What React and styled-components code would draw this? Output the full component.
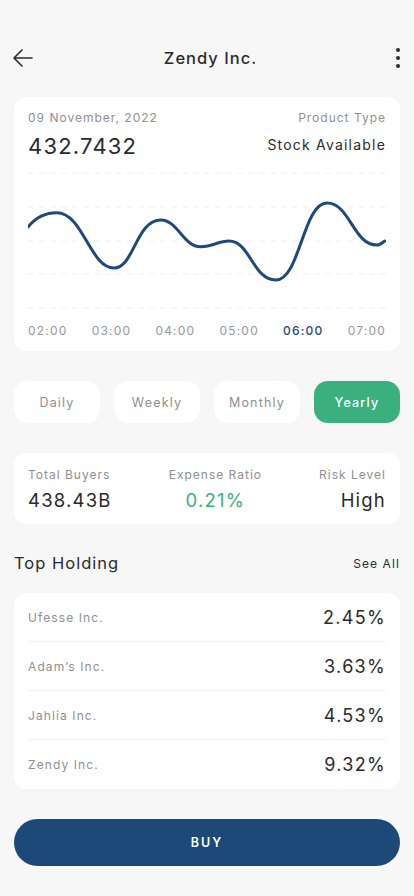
import React, { useState } from 'react';
import styled, { createGlobalStyle } from 'styled-components';

const GlobalStyle = createGlobalStyle`
  * { box-sizing: border-box; }
  body {
    margin: 0;
    background: #f7f7f7;
    font-family: Inter, "Noto Sans", sans-serif;
    color: #2a2a2e;
  }
`;

const Page = styled.div`
  width: 414px;
  min-height: 896px;
  padding: 0 14px 30px;
  display: flex;
  flex-direction: column;
`;

const Header = styled.header`
  height: 44px;
  margin-top: 36px;
  display: flex;
  align-items: center;
  justify-content: space-between;
`;

const IconButton = styled.button`
  width: 24px;
  height: 24px;
  padding: 0;
  border: none;
  background: none;
  display: flex;
  align-items: center;
  justify-content: center;
  color: #2a2a2e;
  margin: ${p => (p.$right ? '0 -10px 0 0' : '0 0 0 -3px')};
`;

const HeaderTitle = styled.h1`
  margin: 0;
  font-size: 16.5px;
  font-weight: 500;
  letter-spacing: 1px;
`;

const Card = styled.section`
  background: #fff;
  border-radius: 12px;
`;

const ChartCard = styled(Card)`
  margin-top: 17px;
  padding: 13px 14px 13px;
`;

const TopRow = styled.div`
  display: flex;
  justify-content: space-between;
`;

const Col = styled.div`
  display: flex;
  flex-direction: column;
  align-items: ${p => p.$align || 'flex-start'};
`;

const Muted = styled.span`
  font-size: 12px;
  color: #8f8f93;
  letter-spacing: 1px;
`;

const Price = styled.span`
  margin-top: 8px;
  font-size: 22px;
  letter-spacing: 1.2px;
  color: #2a2a2e;
`;

const TypeValue = styled.span`
  margin-top: 11px;
  font-size: 14px;
  font-weight: 400;
  letter-spacing: 1.2px;
`;

const ChartSvg = styled.svg`
  display: block;
  margin-top: 6px;
`;

const Axis = styled.div`
  margin-top: 8px;
  display: flex;
  justify-content: space-between;
`;

const AxisLabel = styled.span`
  font-size: 12px;
  letter-spacing: 1.2px;
  color: ${p => (p.$active ? '#1e4a7b' : '#98989c')};
  font-weight: ${p => (p.$active ? 500 : 400)};
`;

const Tabs = styled.div`
  margin-top: 30px;
  display: grid;
  grid-template-columns: repeat(4, 1fr);
  gap: 14px;
`;

const Tab = styled.button`
  height: 42px;
  border: none;
  border-radius: 14px;
  background: ${p => (p.$active ? '#3bb07f' : '#fff')};
  color: ${p => (p.$active ? '#fff' : '#8f8f93')};
  font-family: inherit;
  font-size: 12.5px;
  font-weight: ${p => (p.$active ? 500 : 400)};
  letter-spacing: 1.2px;
`;

const StatsCard = styled(Card)`
  margin-top: 30px;
  padding: 14px 14px 13px;
  display: flex;
  justify-content: space-between;
`;

const StatValue = styled.span`
  margin-top: 7px;
  font-size: 18.5px;
  letter-spacing: 1.2px;
  color: ${p => p.$color || '#2a2a2e'};
`;

const SectionHead = styled.div`
  margin-top: 29px;
  display: flex;
  justify-content: space-between;
  align-items: center;
`;

const SectionTitle = styled.h2`
  margin: 0;
  font-size: 16.5px;
  font-weight: 400;
  letter-spacing: 1px;
`;

const SeeAll = styled.span`
  font-size: 12px;
  letter-spacing: 1.1px;
  color: #2a2a2e;
`;

const HoldingsCard = styled(Card)`
  margin-top: 20px;
  padding: 0 14px;
`;

const HoldingRow = styled.div`
  height: 49px;
  display: flex;
  align-items: center;
  justify-content: space-between;
  border-bottom: 1px solid #f1f1f2;
  &:last-child { border-bottom: none; }
`;

const HoldingName = styled.span`
  font-size: 12px;
  letter-spacing: 1.1px;
  color: #8f8f93;
`;

const HoldingValue = styled.span`
  font-size: 18px;
  letter-spacing: 1.3px;
  color: #2a2a2e;
`;

const BuyButton = styled.button`
  margin-top: 30px;
  height: 47px;
  border: none;
  border-radius: 24px;
  background: #1d4979;
  color: #fff;
  font-family: inherit;
  font-size: 12.5px;
  font-weight: 600;
  letter-spacing: 2px;
`;

const gridLines = [8, 42, 76, 109, 143];
const curve =
  'M0,62 C8,52 18,47.7 28.7,47.7 C55,47.7 62,103 86,103 C106,103 108,55 132.7,55 ' +
  'C150,55 155,81.7 172.7,81.7 C185,81.7 190,76 201,76 C222,76 225,115 247.7,115 ' +
  'C272,115 275,38 299,38 C322,38 325,80 349,80 C352,80 354,78 356.7,76';

const times = ['02:00', '03:00', '04:00', '05:00', '06:00', '07:00'];
const periods = ['Daily', 'Weekly', 'Monthly', 'Yearly'];
const holdings = [
  { name: 'Ufesse Inc.', value: '2.45%' },
  { name: 'Adam’s Inc.', value: '3.63%' },
  { name: 'Jahlia Inc.', value: '4.53%' },
  { name: 'Zendy Inc.', value: '9.32%' },
];

export default function App() {
  const [period, setPeriod] = useState('Yearly');

  return (
    <Page>
      <GlobalStyle />
      <Header>
        <IconButton aria-label="Back">
          <svg width="24" height="24" viewBox="0 0 24 24" fill="none" stroke="currentColor" strokeWidth="1.6" strokeLinecap="round" strokeLinejoin="round">
            <path d="M21 12H3M11 4l-8 8 8 8" />
          </svg>
        </IconButton>
        <HeaderTitle>Zendy Inc.</HeaderTitle>
        <IconButton aria-label="More" $right>
          <svg width="24" height="24" viewBox="0 0 24 24" fill="currentColor">
            <circle cx="12" cy="4" r="2" />
            <circle cx="12" cy="12" r="2" />
            <circle cx="12" cy="20" r="2" />
          </svg>
        </IconButton>
      </Header>

      <ChartCard>
        <TopRow>
          <Col>
            <Muted>09 November, 2022</Muted>
            <Price>432.7432</Price>
          </Col>
          <Col $align="flex-end">
            <Muted>Product Type</Muted>
            <TypeValue>Stock Available</TypeValue>
          </Col>
        </TopRow>
        <ChartSvg width="358" height="150" viewBox="0 0 358 150">
          {gridLines.map(y => (
            <line key={y} x1="0" x2="358" y1={y} y2={y} stroke="#f0f0f2" strokeWidth="1" strokeDasharray="6 5" />
          ))}
          <path d={curve} fill="none" stroke="#1e4a7b" strokeWidth="3" strokeLinecap="round" />
        </ChartSvg>
        <Axis>
          {times.map(t => (
            <AxisLabel key={t} $active={t === '06:00'}>{t}</AxisLabel>
          ))}
        </Axis>
      </ChartCard>

      <Tabs>
        {periods.map(p => (
          <Tab key={p} $active={p === period} onClick={() => setPeriod(p)}>{p}</Tab>
        ))}
      </Tabs>

      <StatsCard>
        <Col>
          <Muted>Total Buyers</Muted>
          <StatValue>438.43B</StatValue>
        </Col>
        <Col $align="center">
          <Muted>Expense Ratio</Muted>
          <StatValue $color="#3bb07f">0.21%</StatValue>
        </Col>
        <Col $align="flex-end">
          <Muted>Risk Level</Muted>
          <StatValue>High</StatValue>
        </Col>
      </StatsCard>

      <SectionHead>
        <SectionTitle>Top Holding</SectionTitle>
        <SeeAll>See All</SeeAll>
      </SectionHead>

      <HoldingsCard>
        {holdings.map(h => (
          <HoldingRow key={h.name}>
            <HoldingName>{h.name}</HoldingName>
            <HoldingValue>{h.value}</HoldingValue>
          </HoldingRow>
        ))}
      </HoldingsCard>

      <BuyButton>BUY</BuyButton>
    </Page>
  );
}
